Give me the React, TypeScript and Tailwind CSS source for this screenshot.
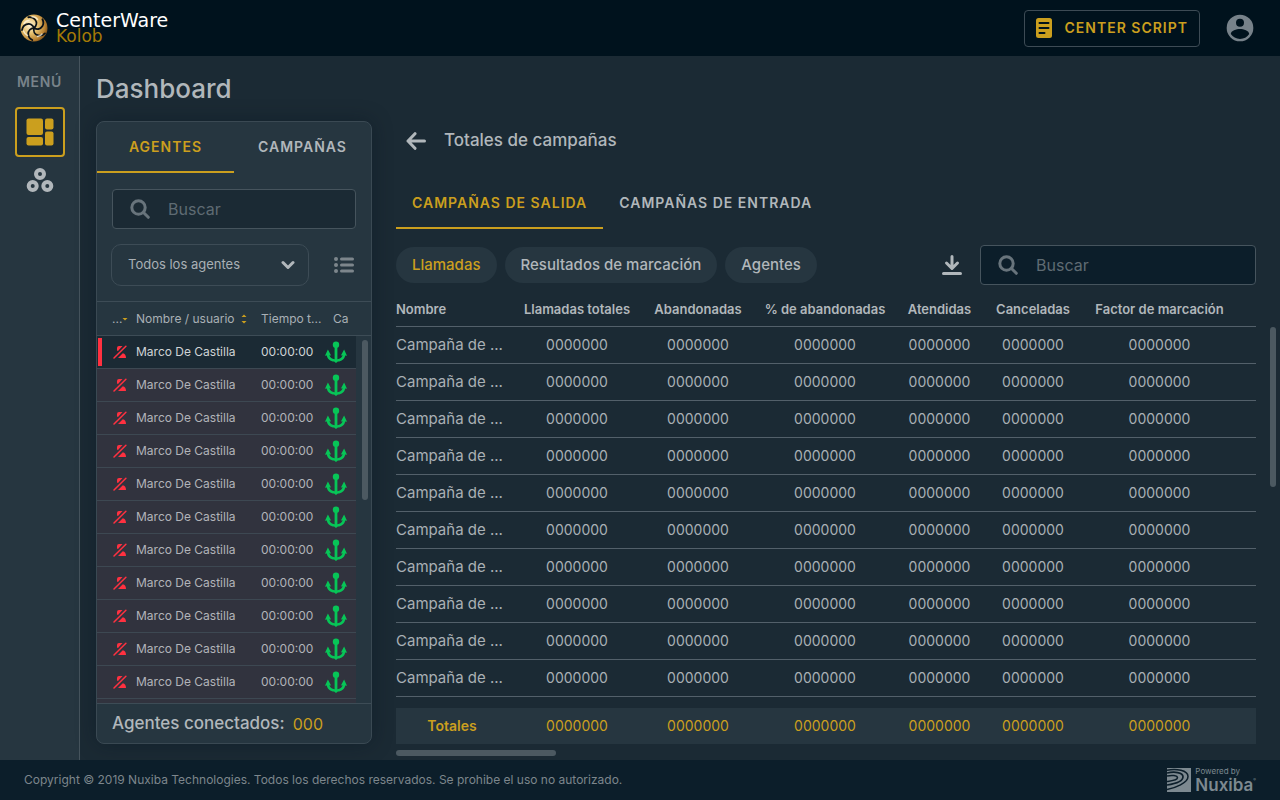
import type {ReactNode} from 'react'
import clsx from 'clsx'

const agents = Array.from({length: 11}, (_, id) => ({
  id,
  name: 'Marco De Castilla',
  time: '00:00:00',
}))

const columns = [
  'Llamadas totales',
  'Abandonadas',
  '% de abandonadas',
  'Atendidas',
  'Canceladas',
  'Factor de marcación',
]

const campaigns = Array.from({length: 10}, (_, id) => ({
  id,
  name: 'Campaña de ...',
  values: columns.map(() => '0000000'),
}))

function KolobMark() {
  return (
    <svg className="size-7" viewBox="0 0 28 28" aria-hidden="true">
      <defs>
        <radialGradient id="gold" cx="0.35" cy="0.4" r="0.7">
          <stop offset="0" stopColor="#fff3d6" />
          <stop offset="0.45" stopColor="#e6bf6c" />
          <stop offset="0.8" stopColor="#b98233" />
          <stop offset="1" stopColor="#7a4a12" />
        </radialGradient>
        <path id="groove" d="M14 14C16 11.500 16.500 8 13.500 5.500C11.500 3.800 9 3.600 6.500 4.400" />
      </defs>
      <circle cx="14" cy="14" r="13.500" fill="url(#gold)" />
      <g fill="none" stroke="#0b1218" strokeWidth="1.800" strokeLinecap="round">
        {[10, 82, 154, 226, 298].map((angle) => (
          <use key={angle} href="#groove" transform={`rotate(${angle} 14 14)`} />
        ))}
      </g>
      <g fill="none" stroke="#fff8e6" strokeWidth="1.400" strokeLinecap="round" opacity="0.75">
        <path d="M4 9.500q2-3 5-3M12 2.800q4 0 5.500 2.700M3.500 17q1.500 3.500 4 4.500M17.500 22.500q3-.5 4.500-2.500" />
      </g>
    </svg>
  )
}

function IconScript() {
  return (
    <svg className="h-5 w-4" viewBox="0 0 16 20" aria-hidden="true">
      <rect width="16" height="20" rx="2.500" fill="#cb9f1e" />
      <path
        d="M3.500 5h9M3.500 10h9M3.500 15h5"
        stroke="#00121d"
        strokeWidth="2"
        strokeLinecap="round"
      />
    </svg>
  )
}

function IconAccount() {
  return (
    <svg className="size-8" viewBox="0 0 24 24" fill="currentColor" aria-hidden="true">
      <path d="M12 2a10 10 0 1 0 0 20 10 10 0 0 0 0-20Zm0 3a3 3 0 1 1 0 6 3 3 0 0 1 0-6Zm0 15.200c-2.900 0-5.400-1.500-6.900-3.700C5.100 14 9.400 12.700 12 12.700s6.900 1.300 6.900 3.800A8.300 8.300 0 0 1 12 20.200Z" />
    </svg>
  )
}

function IconDashboard() {
  return (
    <svg className="size-7" viewBox="0 0 28 28" fill="currentColor" aria-hidden="true">
      <rect x="0.500" y="0.500" width="16.500" height="16.500" rx="2" />
      <rect x="19" y="0.500" width="8.500" height="11" rx="2" />
      <rect x="0.500" y="19" width="16.500" height="8.500" rx="2" />
      <rect x="19" y="13.500" width="8.500" height="14" rx="2" />
    </svg>
  )
}

function IconGroups() {
  return (
    <svg
      className="size-7"
      viewBox="0 0 28 28"
      fill="none"
      stroke="currentColor"
      strokeWidth="4"
      aria-hidden="true"
    >
      <circle cx="14" cy="8" r="4" />
      <circle cx="6.700" cy="20" r="4" />
      <circle cx="21.300" cy="20" r="4" />
    </svg>
  )
}

function IconSearch() {
  return (
    <svg
      className="size-5 shrink-0 text-[#68747c]"
      viewBox="0 0 20 20"
      fill="none"
      stroke="currentColor"
      strokeWidth="3"
      strokeLinecap="round"
      aria-hidden="true"
    >
      <circle cx="8.500" cy="8.500" r="6.700" />
      <path d="m13.500 13.500 4.800 4.800" />
    </svg>
  )
}

function IconList() {
  return (
    <svg
      className="h-4 w-5"
      viewBox="0 0 20 16"
      stroke="currentColor"
      strokeLinecap="round"
      aria-hidden="true"
    >
      <path d="M2 2h.01M2 8h.01M2 14h.01" strokeWidth="4" />
      <path d="M7.500 2h11M7.500 8h11M7.500 14h11" strokeWidth="3" />
    </svg>
  )
}

function IconBack() {
  return (
    <svg
      className="size-5"
      viewBox="0 0 20 20"
      fill="none"
      stroke="currentColor"
      strokeWidth="3"
      strokeLinecap="round"
      strokeLinejoin="round"
      aria-hidden="true"
    >
      <path d="M18.500 10H2M9 2.700 2 10l7 7.300" />
    </svg>
  )
}

function IconDownload() {
  return (
    <svg
      className="size-5"
      viewBox="0 0 20 20"
      fill="none"
      stroke="currentColor"
      strokeWidth="3"
      strokeLinecap="round"
      strokeLinejoin="round"
      aria-hidden="true"
    >
      <path d="M10 1.500V12M4.500 8l5.500 5.500L15.500 8M1.500 18.500h17" />
    </svg>
  )
}

function IconOffline() {
  return (
    <svg className="size-3.5" viewBox="0 0 14 14" aria-hidden="true">
      <path
        d="M4 5.500V3Q4 1 6 1H9.500L5 5.900ZM13 13H5L9.800 8.300Q13 9 13 13Z"
        fill="#ff3140"
      />
      <path d="M1 13 12.900 1.200" stroke="#ff3140" strokeWidth="1.500" strokeLinecap="round" />
    </svg>
  )
}

function IconAnchor() {
  return (
    <svg className="size-[22px]" viewBox="0 0 22 22" fill="#07c557" aria-hidden="true">
      <circle cx="11" cy="3.700" r="3.200" />
      <path d="M9.600 5h2.800v13.200c2.600-.3 4.700-1.700 5.200-3.900l-1.700.2 3.200-5.900L22 14.700l-1.800-.3c-.6 3.600-3.600 5.900-7.300 6.100L11 22l-1.900-1.500c-3.700-.2-6.700-2.500-7.300-6.100L0 14.700l2.900-6.100 3.200 5.900-1.700-.2c.5 2.200 2.600 3.600 5.200 3.900Z" />
    </svg>
  )
}

function IconSort({both}: {both?: boolean}) {
  return (
    <svg className="h-2.5 w-1.5 shrink-0" viewBox="0 0 6 10" fill="#cb9f1e" aria-hidden="true">
      {both ? <path d="M.5 3 3 .5 5.500 3ZM.5 7 3 9.500 5.500 7Z" /> : <path d="M.5 4 3 6.500 5.500 4Z" />}
    </svg>
  )
}

function NuxibaLogo() {
  return (
    <div className="flex items-center gap-1 text-[#7d8990]">
      <svg className="size-6" viewBox="0 0 24 24" aria-hidden="true">
        <path d="M0 0h24v24H0Z" fill="currentColor" />
        <g fill="none" stroke="#0c1e2a">
          <path d="M0 2.200C9 .5 21 2 21 8.500S8 20 0 21.500" strokeWidth="1.500" />
          <path d="M0 5C7 3.500 16 4 16 8.800S7 16 0 17" strokeWidth="1.700" />
          <path d="M0 8c4.500-1 10.500-.8 10.500 1.800S4 13 0 13.500" strokeWidth="1.500" />
        </g>
      </svg>
      <div className="flex flex-col">
        <span className="text-[8px] leading-[10px]">Powered by</span>
        <span className="flex items-start text-[17px] leading-[18px] font-semibold">
          Nuxiba
          <span className="text-[4px] leading-2">®</span>
        </span>
      </div>
    </div>
  )
}

function SearchBox({id, className}: {id: string; className?: string}) {
  return (
    <label
      htmlFor={id}
      className={clsx(
        'flex h-10 items-center gap-4 rounded border border-[#46545d] pl-[17px]',
        className,
      )}
    >
      <IconSearch />
      <input
        id={id}
        type="text"
        aria-label="Buscar"
        placeholder="Buscar"
        className="w-full min-w-0 bg-transparent px-0.5 text-base text-[#b7bcc0] outline-none placeholder:text-[#5f6b73]"
      />
    </label>
  )
}

function Tab({active, className, children}: {active?: boolean; className?: string; children: ReactNode}) {
  return (
    <button
      type="button"
      className={clsx(
        'border-b-2 text-sm font-semibold tracking-[1px]',
        active ? 'border-[#cb9f1e] text-[#cb9f1e]' : 'border-transparent text-[#b1b7bb]',
        className,
      )}
    >
      {children}
    </button>
  )
}

function Chip({active, children}: {active?: boolean; children: ReactNode}) {
  return (
    <button
      type="button"
      className={clsx(
        'h-9 rounded-full bg-[#263640] px-4 text-[15px] font-medium',
        active ? 'text-[#cb9f1e]' : 'text-[#b1b7bb]',
      )}
    >
      {children}
    </button>
  )
}

function Header() {
  return (
    <header className="flex h-14 shrink-0 items-center justify-between bg-[#00121d] pr-6 pl-5">
      <a href="#" className="flex items-center gap-2">
        <KolobMark />
        <span className="flex flex-col font-['DejaVu_Sans',sans-serif]">
          <span className="text-[19px] leading-4 text-white">CenterWare</span>
          <span className="text-[17px] leading-4 text-[#a57a06]">Kolob</span>
        </span>
      </a>
      <div className="flex items-center gap-6">
        <button
          type="button"
          className="flex h-[37px] items-center gap-3 rounded border border-[#3d4b55] px-[11px] text-sm font-semibold tracking-[1px] text-[#cb9f1e]"
        >
          <IconScript />
          CENTER SCRIPT
        </button>
        <button type="button" aria-label="Cuenta" className="text-[#77828a]">
          <IconAccount />
        </button>
      </div>
    </header>
  )
}

function Sidebar() {
  return (
    <nav className="flex w-20 shrink-0 flex-col items-center border-r border-[#46545d] bg-[#263640] pt-4">
      <span className="text-sm leading-5 font-semibold tracking-wider text-[#78838a]">MENÚ</span>
      <button
        type="button"
        aria-label="Dashboard"
        className="mt-[15px] flex size-[50px] items-center justify-center rounded border-2 border-[#cb9f1e] bg-[#1b2a34] text-[#cb9f1e]"
      >
        <IconDashboard />
      </button>
      <button type="button" aria-label="Grupos" className="mt-[9px] text-[#b1b7bb]">
        <IconGroups />
      </button>
    </nav>
  )
}

function AgentColumns() {
  return (
    <colgroup>
      <col className="w-[39px]" />
      <col />
      <col className="w-16" />
      <col className="w-[31px]" />
    </colgroup>
  )
}

function AgentsPanel() {
  return (
    <section className="flex w-[276px] shrink-0 flex-col overflow-hidden rounded-lg border border-[#3a4953] bg-[#263640] shadow-[0_0_20px_rgba(0,18,29,0.35)]">
      <div className="grid h-[51px] shrink-0 grid-cols-2">
        <Tab active>AGENTES</Tab>
        <Tab>CAMPAÑAS</Tab>
      </div>
      <SearchBox id="agent-search" className="mx-[15px] mt-4 shrink-0 bg-[#1b2a34]" />
      <div className="mt-[15px] mr-[17px] mb-[15px] ml-3.5 flex items-center justify-between">
        <div className="relative">
          <select
            aria-label="Filtro de agentes"
            className="h-[42px] w-[198px] appearance-none rounded-[10px] border border-[#3d4c56] bg-transparent px-4 text-[13px] text-[#a9b0b5]"
          >
            <option>Todos los agentes</option>
          </select>
          <svg
            className="pointer-events-none absolute top-4 right-3.5 h-2.5 w-3.5 text-[#b1b7bb]"
            viewBox="0 0 14 10"
            fill="none"
            stroke="currentColor"
            strokeWidth="3"
            strokeLinecap="round"
            strokeLinejoin="round"
            aria-hidden="true"
          >
            <path d="m2 2.500 5 5 5-5" />
          </svg>
        </div>
        <button type="button" aria-label="Ver lista" className="text-[#7d868c]">
          <IconList />
        </button>
      </div>
      <div className="shrink-0 border-y border-[#3d4c56] pr-[15px]">
        <table className="w-full table-fixed text-left text-xs whitespace-nowrap text-[#a9b0b5]">
          <AgentColumns />
          <thead>
            <tr className="h-[33px]">
              <th className="p-0 pl-[15px] font-normal">
                <span className="flex items-center">
                  ...
                  <IconSort />
                </span>
              </th>
              <th className="p-0 font-normal">
                <span className="flex items-center gap-1.5">
                  Nombre / usuario
                  <IconSort both />
                </span>
              </th>
              <th className="p-0 font-normal">Tiempo t...</th>
              <th className="p-0 pl-2 font-normal">Ca</th>
            </tr>
          </thead>
        </table>
      </div>
      <div className="flex min-h-0 flex-1 gap-1.5 overflow-hidden pr-[3px]">
        <table className="w-full table-fixed self-start text-xs whitespace-nowrap">
          <AgentColumns />
          <tbody>
            {agents.map((agent, index) => (
              <tr
                key={agent.id}
                className={clsx(
                  'border-b border-[#3d4852]',
                  index === 0
                    ? 'h-8 bg-[#1b2a34] text-[#d0d4d6]'
                    : 'h-[33px] bg-[#31333e] text-[#b1b4b9]',
                )}
              >
                <td className="p-0">
                  <div className="flex items-center gap-[11px] pl-px">
                    <span className={clsx('h-7 w-1', index === 0 && 'bg-[#ff3140]')} />
                    <IconOffline />
                  </div>
                </td>
                <td className="p-0">{agent.name}</td>
                <td className="p-0">{agent.time}</td>
                <td className="p-0">
                  <IconAnchor />
                </td>
              </tr>
            ))}
            <tr className="h-[33px] bg-[#31333e]">
              <td colSpan={4} />
            </tr>
          </tbody>
        </table>
        <div className="mt-1 h-40 w-1.5 shrink-0 rounded-full bg-[#4c5961]" />
      </div>
      <div className="flex h-10 shrink-0 items-center gap-2 border-t border-[#3d4c56] px-[15px] text-[17px] font-medium text-[#b1b7bb]">
        Agentes conectados: <span className="text-base font-normal text-[#cb9f1e]">000</span>
      </div>
    </section>
  )
}

function CampaignColumns() {
  return (
    <colgroup>
      <col className="w-[116px]" />
      <col className="w-[130px]" />
      <col className="w-[112px]" />
      <col className="w-[142px]" />
      <col className="w-[87px]" />
      <col className="w-[100px]" />
      <col className="w-[173px]" />
    </colgroup>
  )
}

function CampaignsPanel() {
  return (
    <section className="flex min-w-0 flex-1 flex-col">
      <div className="flex h-10 shrink-0 items-center gap-[18px] pl-2.5 text-[#b1b7bb]">
        <button type="button" aria-label="Regresar">
          <IconBack />
        </button>
        <h2 className="text-[17px] font-medium">Totales de campañas</h2>
      </div>
      <div className="mt-4 flex h-[52px] shrink-0">
        <Tab active className="px-4 pt-0.5">
          CAMPAÑAS DE SALIDA
        </Tab>
        <Tab className="px-4 pt-0.5">CAMPAÑAS DE ENTRADA</Tab>
      </div>
      <div className="mt-4 mr-5 flex shrink-0 items-center gap-2">
        <Chip active>Llamadas</Chip>
        <Chip>Resultados de marcación</Chip>
        <Chip>Agentes</Chip>
        <button type="button" aria-label="Descargar" className="mr-2.5 ml-auto text-[#b1b7bb]">
          <IconDownload />
        </button>
        <SearchBox id="campaign-search" className="w-[276px] bg-[#0c1e2a]" />
      </div>
      <div className="flex min-h-0 flex-1 gap-3.5 overflow-hidden">
        <table className="w-full table-fixed self-start text-center text-sm whitespace-nowrap text-[#a9b0b5]">
          <CampaignColumns />
          <thead>
            <tr className="h-[41px] border-b border-[#53606a] text-[13px] text-[#b1b7bb]">
              <th className="p-0 pt-2 text-left font-semibold">Nombre</th>
              {columns.map((column) => (
                <th key={column} className="p-0 pt-2 font-semibold last:pr-5">
                  {column}
                </th>
              ))}
            </tr>
          </thead>
          <tbody>
            {campaigns.map((campaign) => (
              <tr key={campaign.id} className="h-[37px] border-b border-[#53606a]">
                <td className="p-0 text-left text-[15px]">{campaign.name}</td>
                {campaign.values.map((value, index) => (
                  <td key={index} className="p-0 last:pr-5">
                    {value}
                  </td>
                ))}
              </tr>
            ))}
          </tbody>
        </table>
        <div className="mt-[42px] h-40 w-1.5 shrink-0 rounded-full bg-[#4c5961]" />
      </div>
      <div className="mt-[11px] mr-5 shrink-0 bg-[#263640]">
        <table className="w-full table-fixed text-center text-sm text-[#cb9f1e]">
          <CampaignColumns />
          <tbody>
            <tr className="h-9">
              <th className="p-0 pr-1 font-semibold">Totales</th>
              {columns.map((column) => (
                <td key={column} className="p-0 last:pr-5">
                  0000000
                </td>
              ))}
            </tr>
          </tbody>
        </table>
      </div>
      <div className="mt-1.5 mb-1 h-1.5 w-40 shrink-0 rounded-full bg-[#4c5961]" />
    </section>
  )
}

export default function App() {
  return (
    <div className="flex h-screen flex-col bg-[#1b2a34] font-['Inter','Open_Sans',sans-serif]">
      <Header />
      <div className="flex min-h-0 flex-1">
        <Sidebar />
        <main className="flex min-w-0 flex-1 flex-col pt-[17px] pr-1 pl-4">
          <h1 className="text-[26px] leading-8 font-medium text-[#b1b7bb]">Dashboard</h1>
          <div className="mt-4 flex min-h-0 flex-1 gap-6">
            <div className="flex pb-4">
              <AgentsPanel />
            </div>
            <CampaignsPanel />
          </div>
        </main>
      </div>
      <footer className="flex h-10 shrink-0 items-center justify-between bg-[#0c1e2a] px-6 text-xs text-[#7d868c]">
        <p>
          Copyright © 2019 Nuxiba Technologies. Todos los derechos reservados. Se prohibe el uso no
          autorizado.
        </p>
        <NuxibaLogo />
      </footer>
    </div>
  )
}
